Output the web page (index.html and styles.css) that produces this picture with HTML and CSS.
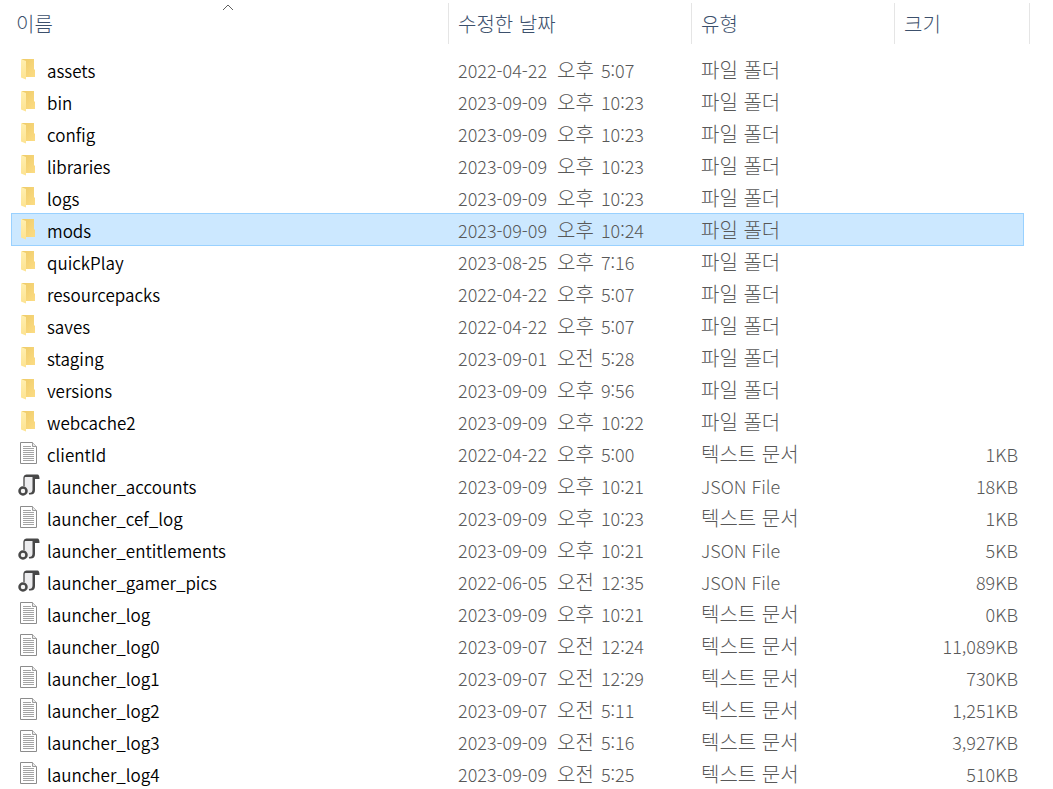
FILE: index.html
```html
<!DOCTYPE html>
<html lang="ko">
<head>
<meta charset="utf-8">
<meta name="viewport" content="width=device-width, initial-scale=1">
<title>파일 목록</title>
<link rel="stylesheet" href="styles.css">
</head>
<body>
<svg class="sprite" aria-hidden="true">
  <defs>
    <linearGradient id="fold-back" x1="0" y1="0" x2="1" y2="1"><stop offset="0" stop-color="#eecb68"/><stop offset="1" stop-color="#fcdc84"/></linearGradient>
    <linearGradient id="fold-front" x1="0" y1="0" x2="0" y2="1"><stop offset="0" stop-color="#ffefb0"/><stop offset="1" stop-color="#fde391"/></linearGradient>
  </defs>
  <symbol id="folder" viewBox="0 0 24 24">
    <path d="M4 1H16V11L17 12V19H7L4 16Z" fill="url(#fold-back)"/>
    <path d="M3 1L8 3V21.500L3 19.500Z" fill="url(#fold-front)"/>
  </symbol>
  <symbol id="doc" viewBox="0 0 24 24">
    <path d="M2.500.500H14.500L18.500 4.500V21.500H2.500Z" fill="#fff" stroke="#8c8c8c"/>
    <path d="M14.500.500V4.500H18.500" fill="#e8e8e8" stroke="#9c9c9c"/>
    <path d="M5 4.500H13M5 6.500H16M5 8.500H16M5 10.500H16M5 12.500H16M5 14.500H16M5 16.500H16M5 18.500H16" stroke="#a4a4a4"/>
  </symbol>
  <symbol id="json" viewBox="0 0 24 24">
    <path d="M6 2H17V15L14 20H9L6 12Z" fill="#ededef"/>
    <path d="M6 12V4Q6 2 8.500 2" fill="none" stroke="#606060" stroke-width="1.500"/>
    <path d="M6 2Q6.500 .500 8.500 .500H19.500Q21.500 .500 21.500 5H17V16Q17 20.500 12.500 20.500H11V19Q14.500 19 14.500 15.500V3H6Z" fill="#484848"/>
    <circle cx="5" cy="17" r="3.500" fill="#f4f4f4" stroke="#484848" stroke-width="2.500"/>
  </symbol>
</svg>
<main class="explorer">
<table class="files">
<colgroup><col class="col-name"><col class="col-date"><col class="col-type"><col class="col-size"><col class="col-edge"></colgroup>
<thead>
<tr>
<th scope="col" aria-sort="ascending"><button class="head head-name" type="button">이름<svg class="sort" viewBox="0 0 12 7" aria-hidden="true"><path d="M1 6L6 1L11 6"/></svg></button></th>
<th scope="col"><button class="head" type="button">수정한 날짜</button></th>
<th scope="col"><button class="head" type="button">유형</button></th>
<th scope="col" colspan="2"><button class="head" type="button">크기</button></th>
</tr>
</thead>
<tbody>
<tr><td><span class="name"><svg class="icon"><use href="#folder"/></svg>assets</span></td><td>2022-04-22 <span class="half">오후</span> 5:07</td><td class="ko">파일 폴더</td><td></td></tr>
<tr><td><span class="name"><svg class="icon"><use href="#folder"/></svg>bin</span></td><td>2023-09-09 <span class="half">오후</span> 10:23</td><td class="ko">파일 폴더</td><td></td></tr>
<tr><td><span class="name"><svg class="icon"><use href="#folder"/></svg>config</span></td><td>2023-09-09 <span class="half">오후</span> 10:23</td><td class="ko">파일 폴더</td><td></td></tr>
<tr><td><span class="name"><svg class="icon"><use href="#folder"/></svg>libraries</span></td><td>2023-09-09 <span class="half">오후</span> 10:23</td><td class="ko">파일 폴더</td><td></td></tr>
<tr><td><span class="name"><svg class="icon"><use href="#folder"/></svg>logs</span></td><td>2023-09-09 <span class="half">오후</span> 10:23</td><td class="ko">파일 폴더</td><td></td></tr>
<tr class="selected" aria-selected="true"><td><span class="name"><svg class="icon"><use href="#folder"/></svg>mods</span></td><td>2023-09-09 <span class="half">오후</span> 10:24</td><td class="ko">파일 폴더</td><td></td></tr>
<tr><td><span class="name"><svg class="icon"><use href="#folder"/></svg>quickPlay</span></td><td>2023-08-25 <span class="half">오후</span> 7:16</td><td class="ko">파일 폴더</td><td></td></tr>
<tr><td><span class="name"><svg class="icon"><use href="#folder"/></svg>resourcepacks</span></td><td>2022-04-22 <span class="half">오후</span> 5:07</td><td class="ko">파일 폴더</td><td></td></tr>
<tr><td><span class="name"><svg class="icon"><use href="#folder"/></svg>saves</span></td><td>2022-04-22 <span class="half">오후</span> 5:07</td><td class="ko">파일 폴더</td><td></td></tr>
<tr><td><span class="name"><svg class="icon"><use href="#folder"/></svg>staging</span></td><td>2023-09-01 <span class="half">오전</span> 5:28</td><td class="ko">파일 폴더</td><td></td></tr>
<tr><td><span class="name"><svg class="icon"><use href="#folder"/></svg>versions</span></td><td>2023-09-09 <span class="half">오후</span> 9:56</td><td class="ko">파일 폴더</td><td></td></tr>
<tr><td><span class="name"><svg class="icon"><use href="#folder"/></svg>webcache2</span></td><td>2023-09-09 <span class="half">오후</span> 10:22</td><td class="ko">파일 폴더</td><td></td></tr>
<tr><td><span class="name"><svg class="icon"><use href="#doc"/></svg>clientId</span></td><td>2022-04-22 <span class="half">오후</span> 5:00</td><td class="ko">텍스트 문서</td><td>1KB</td></tr>
<tr><td><span class="name"><svg class="icon"><use href="#json"/></svg>launcher_accounts</span></td><td>2023-09-09 <span class="half">오후</span> 10:21</td><td>JSON File</td><td>18KB</td></tr>
<tr><td><span class="name"><svg class="icon"><use href="#doc"/></svg>launcher_cef_log</span></td><td>2023-09-09 <span class="half">오후</span> 10:23</td><td class="ko">텍스트 문서</td><td>1KB</td></tr>
<tr><td><span class="name"><svg class="icon"><use href="#json"/></svg>launcher_entitlements</span></td><td>2023-09-09 <span class="half">오후</span> 10:21</td><td>JSON File</td><td>5KB</td></tr>
<tr><td><span class="name"><svg class="icon"><use href="#json"/></svg>launcher_gamer_pics</span></td><td>2022-06-05 <span class="half">오전</span> 12:35</td><td>JSON File</td><td>89KB</td></tr>
<tr><td><span class="name"><svg class="icon"><use href="#doc"/></svg>launcher_log</span></td><td>2023-09-09 <span class="half">오후</span> 10:21</td><td class="ko">텍스트 문서</td><td>0KB</td></tr>
<tr><td><span class="name"><svg class="icon"><use href="#doc"/></svg>launcher_log0</span></td><td>2023-09-07 <span class="half">오전</span> 12:24</td><td class="ko">텍스트 문서</td><td>11,089KB</td></tr>
<tr><td><span class="name"><svg class="icon"><use href="#doc"/></svg>launcher_log1</span></td><td>2023-09-07 <span class="half">오전</span> 12:29</td><td class="ko">텍스트 문서</td><td>730KB</td></tr>
<tr><td><span class="name"><svg class="icon"><use href="#doc"/></svg>launcher_log2</span></td><td>2023-09-07 <span class="half">오전</span> 5:11</td><td class="ko">텍스트 문서</td><td>1,251KB</td></tr>
<tr><td><span class="name"><svg class="icon"><use href="#doc"/></svg>launcher_log3</span></td><td>2023-09-09 <span class="half">오전</span> 5:16</td><td class="ko">텍스트 문서</td><td>3,927KB</td></tr>
<tr><td><span class="name"><svg class="icon"><use href="#doc"/></svg>launcher_log4</span></td><td>2023-09-09 <span class="half">오전</span> 5:25</td><td class="ko">텍스트 문서</td><td>510KB</td></tr>
</tbody>
</table>
</main>
</body>
</html>
```
FILE: styles.css
```css
* { box-sizing: border-box; }

body {
  margin: 0;
  background: #fff;
  color: #585858;
  font-family: "Noto Sans CJK KR", "Noto Sans", sans-serif;
  font-size: 18px;
  font-weight: 300;
  line-height: 24px;
}

.sprite { position: absolute; width: 0; height: 0; }

.explorer { padding: 3px 23px 0 11px; }

.files {
  width: 100%;
  table-layout: fixed;
  border-collapse: separate;
  border-spacing: 0;
}

.col-date { width: 243px; }
.col-type { width: 203px; }
.col-size { width: 129px; }
.col-edge { width: 6px; }

th { padding: 0 0 9px; font-weight: inherit; }

.head {
  display: block;
  position: relative;
  width: 100%;
  height: 41px;
  padding: 1px 9px 0;
  border: 0;
  border-right: 1px solid #e5e5e5;
  background: none;
  color: #3c506c;
  font: inherit;
  font-size: 20px;
  text-align: left;
}

.head-name { padding-left: 5px; }

.sort {
  position: absolute;
  top: 1px;
  left: calc(50% - 8px);
  width: 12px;
  height: 7px;
  fill: none;
  stroke: #5f5f5f;
}

td {
  height: 32px;
  padding: 5px 9px 3px;
  white-space: nowrap;
}

td:first-child { padding-left: 7px; }
td:nth-child(4) { padding-right: 6px; text-align: right; }

.ko { font-size: 20px; }

.half {
  margin: 0 2px 0 5px;
  font-size: 20px;
  line-height: 20px;
}

.name {
  display: flex;
  align-items: flex-start;
  gap: 5px;
  height: 24px;
  color: #000;
  font-size: 17px;
  font-weight: 350;
  line-height: 26px;
}

.icon { width: 24px; height: 24px; }

.selected td {
  background: #cce8ff;
  box-shadow: inset 0 1px #99d1ff, 0 1px #99d1ff;
}

.selected td:first-child { box-shadow: inset 1px 1px #99d1ff, 0 1px #99d1ff; }
.selected td:nth-child(4) { box-shadow: inset -1px 1px #99d1ff, 0 1px #99d1ff; }
```
